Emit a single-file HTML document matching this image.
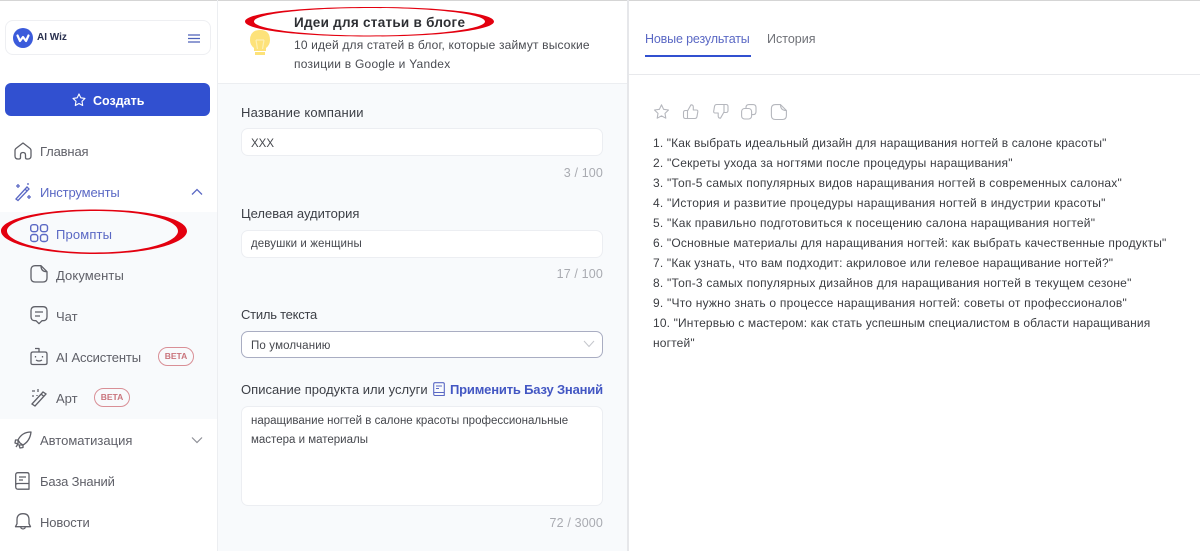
<!DOCTYPE html>
<html lang="ru"><head><meta charset="utf-8"><title>AI Wiz</title>
<style>
html,body{margin:0;padding:0}
body{width:1200px;height:551px;overflow:hidden;background:#fff;position:relative;font-family:"Liberation Sans","Noto Sans CJK SC",sans-serif;font-size:12.5px;color:#444}
.a{position:absolute}
.t{position:absolute;white-space:nowrap;line-height:18px}
.g{color:#5f6068;font-size:13px;letter-spacing:0}
.b{color:#5a68c4;font-size:13px;letter-spacing:0}
.inp{position:absolute;left:241px;width:360px;background:#fff;border:1px solid #eceef2;border-radius:7px}
.cnt{position:absolute;right:597px;color:#a9abb1;font-size:12.5px;line-height:18px;letter-spacing:.15px}
.lbl{color:#3c3f46;font-size:13px;letter-spacing:0}
.val{color:#45474d;font-size:11.5px;letter-spacing:0}
.res{color:#3b3d42;font-size:12px;left:653px;letter-spacing:.15px}
.beta{position:absolute;border:1px solid #d98f96;border-radius:10px;width:34px;height:17px;line-height:17px;text-align:center;color:#c9747c;font-size:8.5px;font-weight:bold}
svg{position:absolute;overflow:visible;fill:none}
</style></head><body>
<div class="a" style="left:0;top:0;width:1200px;height:1px;background:#d5d5d5"></div>
<div class="a" style="left:217px;top:0;width:1px;height:551px;background:#eceef1"></div>
<div class="a" style="left:218px;top:84px;width:409px;height:467px;background:#f8fafc"></div>
<div class="a" style="left:218px;top:83px;width:409px;height:1px;background:#eceef1"></div>
<div class="a" style="left:627px;top:0;width:2px;height:551px;background:#e6e7ea"></div>
<div class="a" style="left:629px;top:74px;width:571px;height:1px;background:#e8e9ec"></div>

<div class="a" style="left:5px;top:20px;width:204px;height:33px;border:1px solid #eeeff2;border-radius:8px"></div>
<div class="a" style="left:13px;top:28px;width:20px;height:20px;border-radius:50%;background:#3b5bdb"></div>
<svg style="left:13px;top:28px" width="20" height="20"><path d="M4.5 7.5l2.5 5.5 3-4 3 4 2.500-5.500" stroke="#fff" stroke-width="2.200" stroke-linejoin="round" stroke-linecap="round"/></svg>
<div class="t" style="left:37px;top:29px;font-size:10px;font-weight:bold;color:#29304f">AI Wiz</div>
<svg style="left:187px;top:33px" width="15" height="12" stroke="#4d62b9" stroke-width="1.300"><path d="M1 2h12M1 5.500h12M1 9h12"/></svg>

<div class="a" style="left:5px;top:83px;width:205px;height:33px;border-radius:6px;background:#3150d0"></div>
<svg style="left:72px;top:93px" width="14" height="14" stroke="#fff" stroke-width="1.100" stroke-linejoin="round"><path d="M7 1l1.800 3.800 4.200.6-3 2.900.7 4.200L7 10.500l-3.700 2 .7-4.200-3-2.900 4.200-.6z"/></svg>
<div class="t" style="left:93px;top:92px;color:#fff;font-size:12.500px;font-weight:bold">Создать</div>

<svg style="left:14px;top:142px" width="18" height="18" stroke="#5f6068" stroke-width="1.300" stroke-linejoin="round"><path d="M1 8.500Q1 7 2.500 6L9 1l6.500 5Q17 7 17 8.500V14q0 3-3 3h-1q-1.500 0-1.500-1.500V13q0-2.500-2.500-2.500T6.500 13v2.500Q6.500 17 5 17H4q-3 0-3-3z"/></svg>
<div class="t g" style="left:40px;top:143px;letter-spacing:-.15px">Главная</div>

<svg style="left:14px;top:183px" width="18" height="18" stroke="#5a68c4" stroke-width="1.300"><path d="M2 16L13 4l2 2L4 17.500zM11 6l2 2M4 1v4M2 3h4M15 12v4M13 14h4M14 0v2"/></svg>
<div class="t b" style="left:40px;top:184px;letter-spacing:-.13px">Инструменты</div>
<svg style="left:191px;top:188px" width="12" height="8" stroke="#5a68c4" stroke-width="1.300"><path d="M1 6.500L6 1.500l5 5"/></svg>

<div class="a" style="left:0;top:212px;width:217px;height:207px;background:#f8fafc"></div>

<svg style="left:30px;top:224px" width="19" height="19" stroke="#5a68c4" stroke-width="1.400"><rect x=".7" y=".7" width="7" height="7" rx="2.400"/><rect x="10.500" y=".7" width="7" height="7" rx="2.400"/><rect x=".7" y="10.500" width="7" height="7" rx="2.400"/><rect x="10.500" y="10.500" width="7" height="7" rx="2.400"/></svg>
<div class="t b" style="left:56px;top:226px;letter-spacing:.15px">Промпты</div>

<svg style="left:30px;top:265px" width="18" height="18" stroke="#5f6068" stroke-width="1.300" stroke-linejoin="round"><path d="M5 .7h6l6 6V13q0 4-4 4H5q-4 0-4-4V5q0-4.300 4-4.300zM11 .7q0 6 6 6"/></svg>
<div class="t g" style="left:56px;top:267px;letter-spacing:.1px">Документы</div>

<svg style="left:30px;top:306px" width="18" height="19" stroke="#5f6068" stroke-width="1.300" stroke-linejoin="round"><path d="M5 .7h8q4 0 4 4v6q0 4-4 4h-1l-3 3-3-3H5q-4 0-4-4v-6q0-4 4-4zM5 6h8M5 10h5"/></svg>
<div class="t g" style="left:56px;top:308px">Чат</div>

<svg style="left:30px;top:347px" width="18" height="19" stroke="#5f6068" stroke-width="1.300" stroke-linejoin="round"><path d="M3 5h12q2 0 2 2v9q0 1.500-2 1.500H3q-2 0-2-1.500V7q0-2 2-2zM9 5V1.500H5M5.500 9v1.500M12.500 9v1.500M6 13q3 2 6 0"/></svg>
<div class="t g" style="left:56px;top:349px;letter-spacing:-.15px">AI Ассистенты</div>
<div class="beta" style="left:158px;top:347px">BETA</div>

<svg style="left:30px;top:388px" width="18" height="19" stroke="#5f6068" stroke-width="1.300"><path d="M2 16L13 4l3 2L5 18zM11 6l3 2.500M2 3h3M8 1v3M2 8h2M7 7v1"/></svg>
<div class="t g" style="left:56px;top:390px">Арт</div>
<div class="beta" style="left:94px;top:388px">BETA</div>

<svg style="left:14px;top:431px" width="18" height="18" stroke="#5f6068" stroke-width="1.300" stroke-linejoin="round"><path d="M6 12L4 9q4-8 13-8-1 9-8 13zM4 9H1.500L1 12l3 1zM9 14v2.500l-3 .5-1-3zM4 13l-2 3"/></svg>
<div class="t g" style="left:40px;top:432px">Автоматизация</div>
<svg style="left:191px;top:436px" width="12" height="8" stroke="#8e9097" stroke-width="1.200"><path d="M1 1.500L6 6.500l5-5"/></svg>

<svg style="left:15px;top:472px" width="15" height="18" stroke="#5f6068" stroke-width="1.300" stroke-linejoin="round"><path d="M3 .7h9q2 0 2 2v14.500H3q-2.300 0-2.300-2.500v-12Q.7.7 3 .7zM.7 13q0-1.500 2.300-1.500h11M4 5h7M4 8h4"/></svg>
<div class="t g" style="left:40px;top:473px;letter-spacing:-.15px">База Знаний</div>

<svg style="left:15px;top:513px" width="16" height="18" stroke="#5f6068" stroke-width="1.300" stroke-linejoin="round"><path d="M8 .7q6 0 6 6v4l1.500 3H.5L2 10.700v-4q0-6 6-6zM5.500 14.500q2.500 3 5 0"/></svg>
<div class="t g" style="left:40px;top:514px;letter-spacing:-.1px">Новости</div>

<!-- middle -->
<svg style="left:248px;top:29px" width="24" height="27"><path d="M12 1q10 0 10 10 0 5-4 8v3H6v-3q-4-3-4-8Q2 1 12 1z" fill="#fde27a"/><rect x="7" y="23" width="10" height="3" fill="#fde27a"/><path d="M8 11l1.500 9M16 11l-1.500 9M8 11h8" stroke="#fdf0b5" stroke-width="1.200"/></svg>
<div class="t" style="left:294px;top:14px;font-size:13.500px;font-weight:bold;color:#2d2f33;letter-spacing:.27px">Идеи для статьи в блоге</div>
<div class="t" style="left:294px;top:36px;color:#4a4c52;font-size:12px;letter-spacing:.16px">10 идей для статей в блог, которые займут высокие</div>
<div class="t" style="left:294px;top:55px;color:#4a4c52;font-size:12px;letter-spacing:.24px">позиции в Google и Yandex</div>

<div class="t lbl" style="left:241px;top:104px;letter-spacing:.18px">Название компании</div>
<div class="inp" style="top:128px;height:26px"></div>
<div class="t val" style="left:251px;top:135px">XXX</div>
<div class="cnt" style="top:164px">3 / 100</div>

<div class="t lbl" style="left:241px;top:205px">Целевая аудитория</div>
<div class="inp" style="top:230px;height:26px"></div>
<div class="t val" style="left:251px;top:235px;letter-spacing:.1px">девушки и женщины</div>
<div class="cnt" style="top:265px">17 / 100</div>

<div class="t lbl" style="left:241px;top:306px;letter-spacing:-.25px">Стиль текста</div>
<div class="inp" style="top:331px;height:25px;border-color:#a9adc2"></div>
<div class="t val" style="left:251px;top:337px;letter-spacing:.15px">По умолчанию</div>
<svg style="left:583px;top:340px" width="12" height="8" stroke="#c4c6cc" stroke-width="1"><path d="M1 1l5 5.500L11 1"/></svg>

<div class="t lbl" style="left:241px;top:381px;letter-spacing:.03px">Описание продукта или услуги</div>
<svg style="left:433px;top:382px" width="12" height="15" stroke="#5a68c4" stroke-width="1.100" stroke-linejoin="round"><path d="M2 .7h8q1.300 0 1.300 1.300v11.500H2q-1.300 0-1.300-1.500V2Q.7.7 2 .7zM.7 10.500h10.600M3 4h6M3 6.500h3"/></svg>
<div class="t" style="left:450px;top:381px;color:#4357c3;font-size:13px;font-weight:bold;letter-spacing:-.18px">Применить Базу Знаний</div>
<div class="inp" style="top:406px;height:98px"></div>
<div class="t val" style="left:251px;top:412px">наращивание ногтей в салоне красоты профессиональные</div>
<div class="t val" style="left:251px;top:431px">мастера и материалы</div>
<div class="cnt" style="top:514px">72 / 3000</div>

<!-- right -->
<div class="t" style="left:645px;top:30px;color:#5a68c4;font-size:12.500px;letter-spacing:-.15px">Новые результаты</div>
<div class="t" style="left:767px;top:30px;color:#6f7177;font-size:12.500px;letter-spacing:0">История</div>
<div class="a" style="left:645px;top:55px;width:106px;height:2px;background:#3150d0"></div>

<svg style="left:654px;top:104px" width="16" height="16" stroke="#b5b7bd" stroke-width="1.100" stroke-linejoin="round"><path d="M7.500 .8l2.100 4.500 4.900.7-3.500 3.400.8 4.800-4.300-2.300-4.300 2.300.8-4.800L.5 6l4.900-.7z"/></svg>
<svg style="left:683px;top:104px" width="16" height="16" stroke="#b5b7bd" stroke-width="1.100" stroke-linejoin="round"><path d="M4.500 6.500h-2q-2 0-2 2v4q0 2 2 2h2zM4.500 7L8 .8q2.300 0 2.300 2.200V6h3q1.800 0 1.500 1.800l-.8 4.700q-.3 2-2.300 2H4.500"/></svg>
<svg style="left:713px;top:104px" width="16" height="16" stroke="#b5b7bd" stroke-width="1.100" stroke-linejoin="round"><path d="M11 8.500h2q2 0 2-2v-4q0-2-2-2h-2zM11 8l-3.500 6.200q-2.300 0-2.300-2.200V9h-3Q.4 9 .7 7.200l.8-4.700q.3-2 2.300-2H11"/></svg>
<svg style="left:741px;top:104px" width="16" height="16" stroke="#b5b7bd" stroke-width="1.100" stroke-linejoin="round"><rect x=".6" y="4.500" width="10" height="10.500" rx="3"/><path d="M5 4.500V3.500Q5 .6 8 .6h4q3 0 3 3v4q0 3-3 3h-1.400"/></svg>
<svg style="left:771px;top:104px" width="16" height="16" stroke="#b5b7bd" stroke-width="1.100" stroke-linejoin="round"><path d="M4.500.6h5l5.900 5.900v5q0 4-4 4h-7q-4 0-4-4v-7q0-3.900 4.100-3.900zM9.500.6q0 5.900 5.900 5.900"/></svg>

<div class="t res" style="top:134px;letter-spacing:.14px">1. "Как выбрать идеальный дизайн для наращивания ногтей в салоне красоты"</div>
<div class="t res" style="top:154px;letter-spacing:.2px">2. "Секреты ухода за ногтями после процедуры наращивания"</div>
<div class="t res" style="top:174px;letter-spacing:.2px">3. "Топ-5 самых популярных видов наращивания ногтей в современных салонах"</div>
<div class="t res" style="top:194px;letter-spacing:.24px">4. "История и развитие процедуры наращивания ногтей в индустрии красоты"</div>
<div class="t res" style="top:214px;letter-spacing:.24px">5. "Как правильно подготовиться к посещению салона наращивания ногтей"</div>
<div class="t res" style="top:234px;letter-spacing:.19px">6. "Основные материалы для наращивания ногтей: как выбрать качественные продукты"</div>
<div class="t res" style="top:254px;letter-spacing:.18px">7. "Как узнать, что вам подходит: акриловое или гелевое наращивание ногтей?"</div>
<div class="t res" style="top:274px;letter-spacing:.22px">8. "Топ-3 самых популярных дизайнов для наращивания ногтей в текущем сезоне"</div>
<div class="t res" style="top:294px;letter-spacing:.22px">9. "Что нужно знать о процессе наращивания ногтей: советы от профессионалов"</div>
<div class="t res" style="top:314px;letter-spacing:.15px">10. "Интервью с мастером: как стать успешным специалистом в области наращивания</div>
<div class="t res" style="top:334px">ногтей"</div>

<!-- red ellipses -->
<svg style="left:0;top:0" width="1200" height="551">
<path fill-rule="evenodd" fill="#e3000f" d="M245 21.500C245 13 300 7 370 7S494 13 494 21.500 440 36.500 370 36.500 245 30 245 21.500zM254 21.500C254 29 305 35.500 370 35.500S485 29 485 21.500 435 8 370 8 254 14 254 21.500z"/>
<path fill-rule="evenodd" fill="#e3000f" d="M1 231C1 219 40 209.500 95 209.500S187 219 187 231 150 254 95 254 1 243 1 231zM7 231C7 242 45 252.500 95 252.500S178 242 178 231 145 211 95 211 7 220 7 231z"/>
</svg>
</body></html>
